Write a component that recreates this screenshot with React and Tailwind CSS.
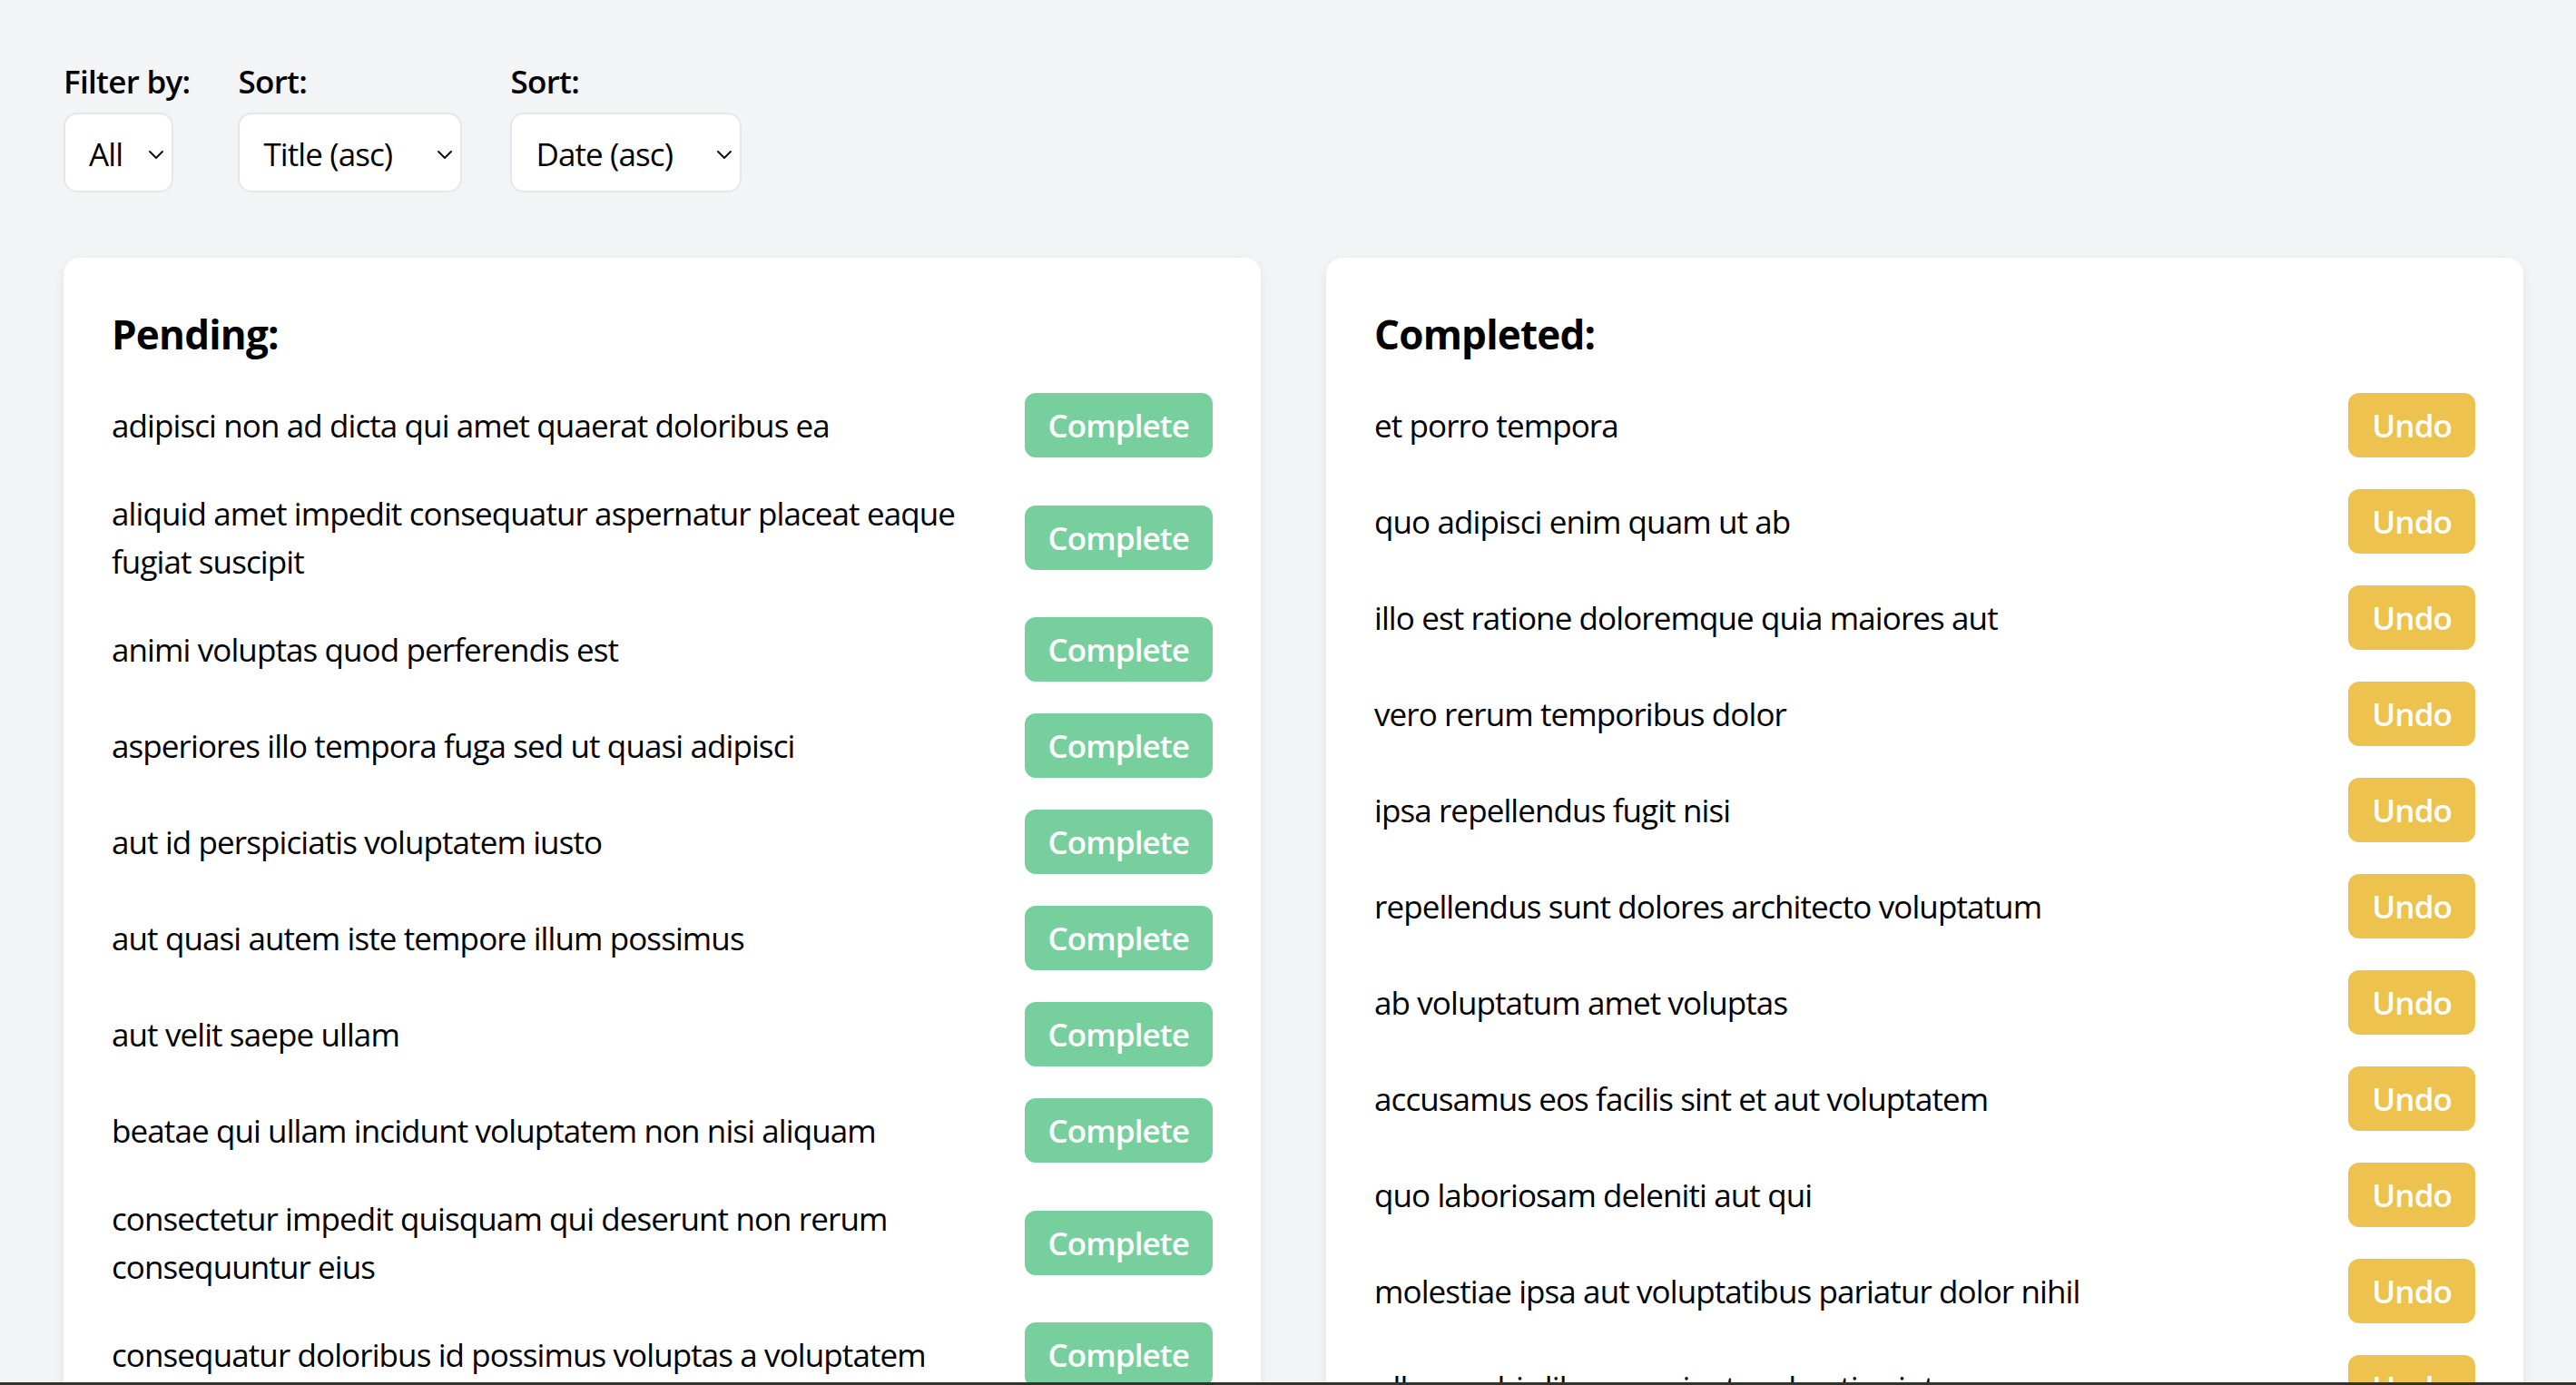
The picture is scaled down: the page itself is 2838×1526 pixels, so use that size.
import React, { useState } from "react";

const pendingTodos = [
  "adipisci non ad dicta qui amet quaerat doloribus ea",
  "aliquid amet impedit consequatur aspernatur placeat eaque fugiat suscipit",
  "animi voluptas quod perferendis est",
  "asperiores illo tempora fuga sed ut quasi adipisci",
  "aut id perspiciatis voluptatem iusto",
  "aut quasi autem iste tempore illum possimus",
  "aut velit saepe ullam",
  "beatae qui ullam incidunt voluptatem non nisi aliquam",
  "consectetur impedit quisquam qui deserunt non rerum consequuntur eius",
  "consequatur doloribus id possimus voluptas a voluptatem",
  "delectus ullam et corporis nulla voluptas sequi",
];

const completedTodos = [
  "et porro tempora",
  "quo adipisci enim quam ut ab",
  "illo est ratione doloremque quia maiores aut",
  "vero rerum temporibus dolor",
  "ipsa repellendus fugit nisi",
  "repellendus sunt dolores architecto voluptatum",
  "ab voluptatum amet voluptas",
  "accusamus eos facilis sint et aut voluptatem",
  "quo laboriosam deleniti aut qui",
  "molestiae ipsa aut voluptatibus pariatur dolor nihil",
  "ullam nobis libero sapiente ad optio sint",
];

const Chevron = () => (
  <svg width="18" height="11" viewBox="0 0 18 11" fill="none" className="shrink-0">
    <polyline points="2,2 9,9 16,2" stroke="#111" strokeWidth="2" strokeLinecap="round" strokeLinejoin="round" />
  </svg>
);

const FakeSelect = ({ label, value, width }) => (
  <div className="flex flex-col">
    <span className="text-[35px] leading-[53px] font-semibold tracking-[-0.7px] mb-[8px]">{label}</span>
    <div
      className={`flex items-center justify-between h-[88px] pl-[26px] pr-[8px] pt-[4px] bg-white border-2 border-[#e5e7eb] rounded-[15px] text-[35px] tracking-[-0.9px] ${width}`}
    >
      <span>{value}</span>
      <Chevron />
    </div>
  </div>
);

const TodoRow = ({ title, done }) => (
  <div className="flex items-center justify-between gap-[35px]">
    <p className="flex-1 text-[35px] leading-[53px] tracking-[-0.9px]">{title}</p>
    <button
      className={
        done
          ? "shrink-0 px-[26px] py-[9px] rounded-[12px] bg-[#edc24e] text-white text-[35px] leading-[53px] font-semibold tracking-[-0.9px]"
          : "shrink-0 px-[26px] py-[9px] rounded-[12px] bg-[#78cf9e] text-white text-[35px] leading-[53px] font-semibold tracking-[-0.9px]"
      }
    >
      {done ? "Undo" : "Complete"}
    </button>
  </div>
);

const TodoCard = ({ heading, items, done }) => (
  <div className="bg-white rounded-[18px] shadow-[0_4px_14px_rgba(0,0,0,0.07)] p-[53px]">
    <h2 className="text-[44px] leading-[62px] font-bold tracking-[-0.8px] mb-[34px]">{heading}</h2>
    <div className="flex flex-col gap-[35px]">
      {items.map((t) => (
        <TodoRow key={t} title={t} done={done} />
      ))}
    </div>
  </div>
);

export default function App() {
  const [filter] = useState("All");

  return (
    <div className="min-h-screen bg-[#f3f4f6] pl-[70px] pr-[58px] pt-[63px] pb-[70px] text-black font-['Open_Sans','Noto_Sans',sans-serif]">
      <div className="flex gap-[53px] mb-[72px]">
        <FakeSelect label="Filter by:" value={filter} width="w-[121px]" />
        <FakeSelect label="Sort:" value="Title (asc)" width="w-[247px]" />
        <FakeSelect label="Sort:" value="Date (asc)" width="w-[255px]" />
      </div>

      <div className="grid grid-cols-2 gap-[72px] items-start">
        <TodoCard heading="Pending:" items={pendingTodos} done={false} />
        <TodoCard heading="Completed:" items={completedTodos} done={true} />
      </div>

      <div className="fixed bottom-0 left-0 right-0 h-[3px] bg-[#34342f]" />
    </div>
  );
}
